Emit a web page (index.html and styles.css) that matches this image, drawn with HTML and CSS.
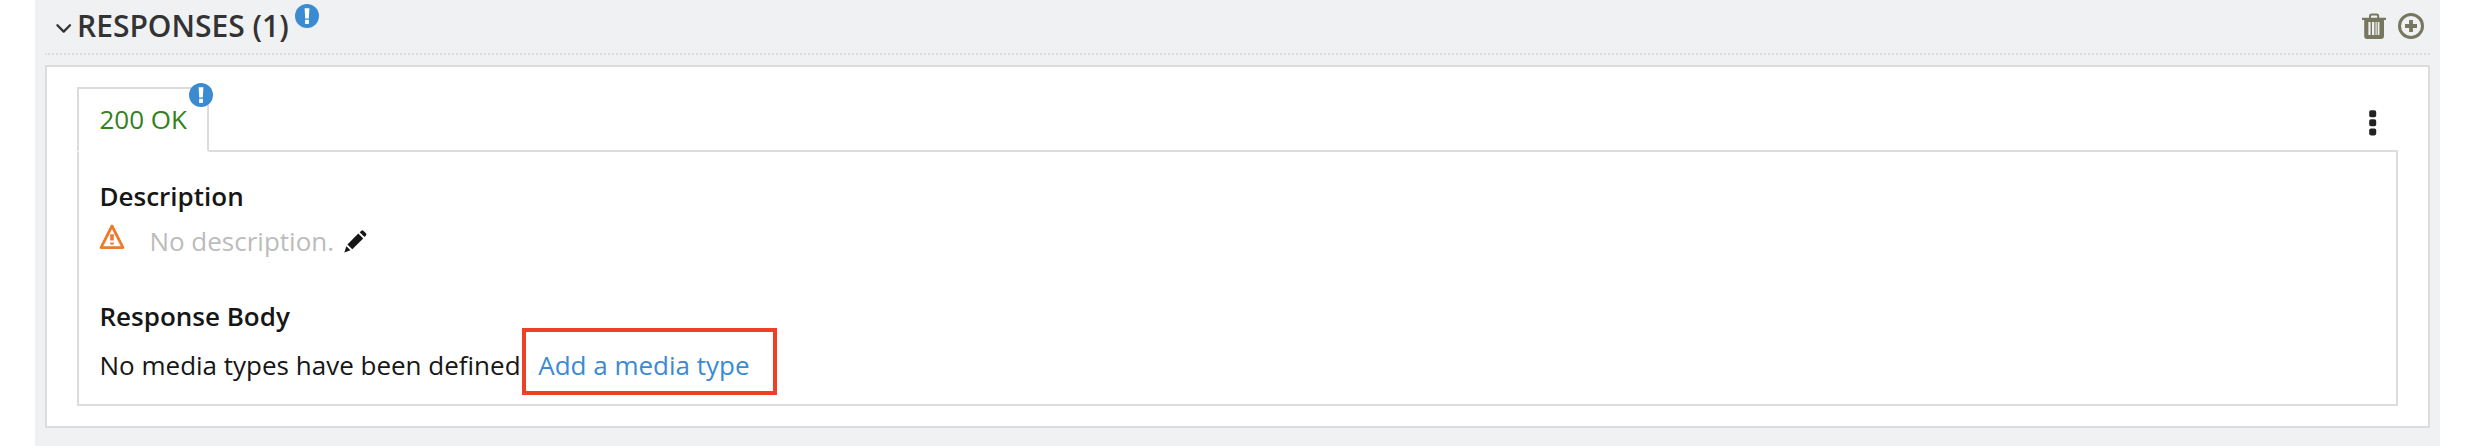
FILE: index.html
```html
<!DOCTYPE html>
<html lang="en">
<head>
<meta charset="utf-8">
<title>Responses</title>
<link rel="stylesheet" href="styles.css">
</head>
<body>
<section class="responses">
  <header class="section-header">
    <svg class="chevron" width="18" height="12" viewBox="0 0 18 12"><path d="M2.4 2.2 8.7 8.6 15 2.2" fill="none" stroke="#333" stroke-width="2.3" stroke-linecap="round" stroke-linejoin="round"/></svg>
    <h2 class="section-title">RESPONSES (1)</h2>
    <svg class="badge header-badge" width="24" height="24" viewBox="0 0 24 24"><circle cx="12" cy="12" r="12"/><path class="mark" d="M9.6 4.2h4.8l-.6 10.2h-3.6zM10.1 15.8h3.8v4.2h-3.8z"/></svg>
    <div class="actions">
      <svg width="24" height="26" viewBox="0 0 24 26" fill="#77775f"><path d="M8 5V3.2Q8 1.6 9.6 1.6h5Q16.2 1.6 16.2 3.2V5" fill="none" stroke="#77775f" stroke-width="2"/><path d="M0 4.7h24v2.2h-2V23q0 3-3 3H5.2q-3 0-3-3V6.9H0z"/><path d="M6.4 9h2.2v13H6.4zM10 9h2.3v13H10zM13.5 9h1.2v13h-1.2zM15.7 9h1.7v13h-1.7z" fill="#f0f1f3"/></svg>
      <svg width="26" height="26" viewBox="0 0 26 26" fill="none" stroke="#77775f"><circle cx="13" cy="13" r="11.5" stroke-width="3"/><path d="M7 13h12M13 7v12" stroke-width="3.8"/></svg>
    </div>
  </header>
  <div class="panel">
    <div class="tab-bar">
      <div class="tab">200 OK
        <svg class="badge tab-badge" width="24" height="24" viewBox="0 0 24 24"><circle cx="12" cy="12" r="12"/><path class="mark" d="M9.6 4.2h4.8l-.6 10.2h-3.6zM10.1 15.8h3.8v4.2h-3.8z"/></svg>
      </div>
      <svg class="more" width="8" height="26" viewBox="0 0 8 26" fill="#222"><rect x=".2" y=".2" width="7" height="7" rx="1.8"/><rect x=".2" y="9.2" width="7" height="7" rx="1.8"/><rect x=".2" y="18.4" width="7" height="7" rx="1.8"/></svg>
    </div>
    <div class="tab-content">
      <h3 class="label">Description</h3>
      <div class="description">
        <svg class="warning" width="26" height="26" viewBox="0 0 26 26"><path d="M13 2 24 23.600H2z" fill="none" stroke="#ed7a2d" stroke-width="2.8" stroke-linejoin="round"/><path d="M11.2 10.2h3.6v6.4h-3.6zM11.2 18.4h3.6v2.2h-3.6z" fill="#ed7a2d"/></svg>
        <span class="placeholder">No description.</span>
        <svg class="pencil" width="23" height="23" viewBox="0 0 23 23" fill="#161616"><path d="M3.4 14.4 14.3 3.5l4.9 4.9L8.3 19.3z"/><path d="M15.7 2.2 17.4.7q1-.8 2 .1l2.5 2.5q.9 1 .1 2L20.500 7z"/><path d="M2.4 16.2 6.5 20.3.3 22.5z"/></svg>
      </div>
      <h3 class="label">Response Body</h3>
      <p class="body-text"><span>No media types have been defined.</span><a class="add-link">Add a media type</a></p>
    </div>
  </div>
</section>
</body>
</html>
```

FILE: styles.css
```css
* { box-sizing: border-box; }
body {
  margin: 0;
  background: #fff;
  font: 26px/36px "Open Sans", "Noto Sans", sans-serif;
  color: #161616;
}
svg { display: block; flex: none; }
h2, h3, p { margin: 0; }
.responses {
  height: 446px;
  margin: 0 38px 0 35px;
  padding: 0 10px;
  background: #f0f1f3;
}
.section-header {
  display: flex;
  align-items: flex-start;
  height: 55px;
  padding-left: 10px;
  border-bottom: 2px dotted #dcdcdc;
}
.chevron { margin-top: 23px; }
.section-title {
  margin-left: 4px;
  font-size: 30px;
  font-weight: 600;
  line-height: 51px;
  color: #333;
  white-space: nowrap;
}
.badge { fill: #3a8bd1; }
.mark { fill: #fff; }
.header-badge { margin: 4px 0 0 6.4px; }
.actions {
  display: flex;
  gap: 12px;
  margin: 13px 6px 0 auto;
}
.panel {
  height: 363px;
  margin-top: 10px;
  padding: 20px 30px;
  border: 2px solid #dcdcdc;
  background: #fff;
}
.tab-bar {
  display: flex;
  justify-content: space-between;
  align-items: flex-start;
  height: 63px;
}
.tab {
  position: relative;
  z-index: 1;
  width: 132px;
  height: 65px;
  padding: 12px 0 0 20.5px;
  border: 2px solid #dcdcdc;
  border-bottom-color: #fff;
  background: #fff;
  color: #338120;
}
.tab-badge { position: absolute; top: -6px; right: -6px; }
.more { margin: 23px 21px 0 0; }
.tab-content {
  height: 256px;
  padding: 26px 20.5px 0;
  border: 2px solid #dcdcdc;
}
.label { font-size: 26px; font-weight: 600; }
.description {
  display: flex;
  align-items: flex-start;
  height: 36px;
  margin: 9px 0 39px;
}
.warning { margin: 1px 0 0 -.3px; }
.placeholder { margin-left: 24.2px; color: #bcbcbc; }
.pencil { margin: 7px 0 0 9.5px; }
.body-text { display: flex; margin-top: 13px; }
.add-link {
  position: relative;
  margin-left: 10.8px;
  color: #3a8bd1;
}
.add-link::after {
  content: "";
  position: absolute;
  inset: -19px -27.5px -12px -16px;
  border: 4px solid #ef4026;
}
```
